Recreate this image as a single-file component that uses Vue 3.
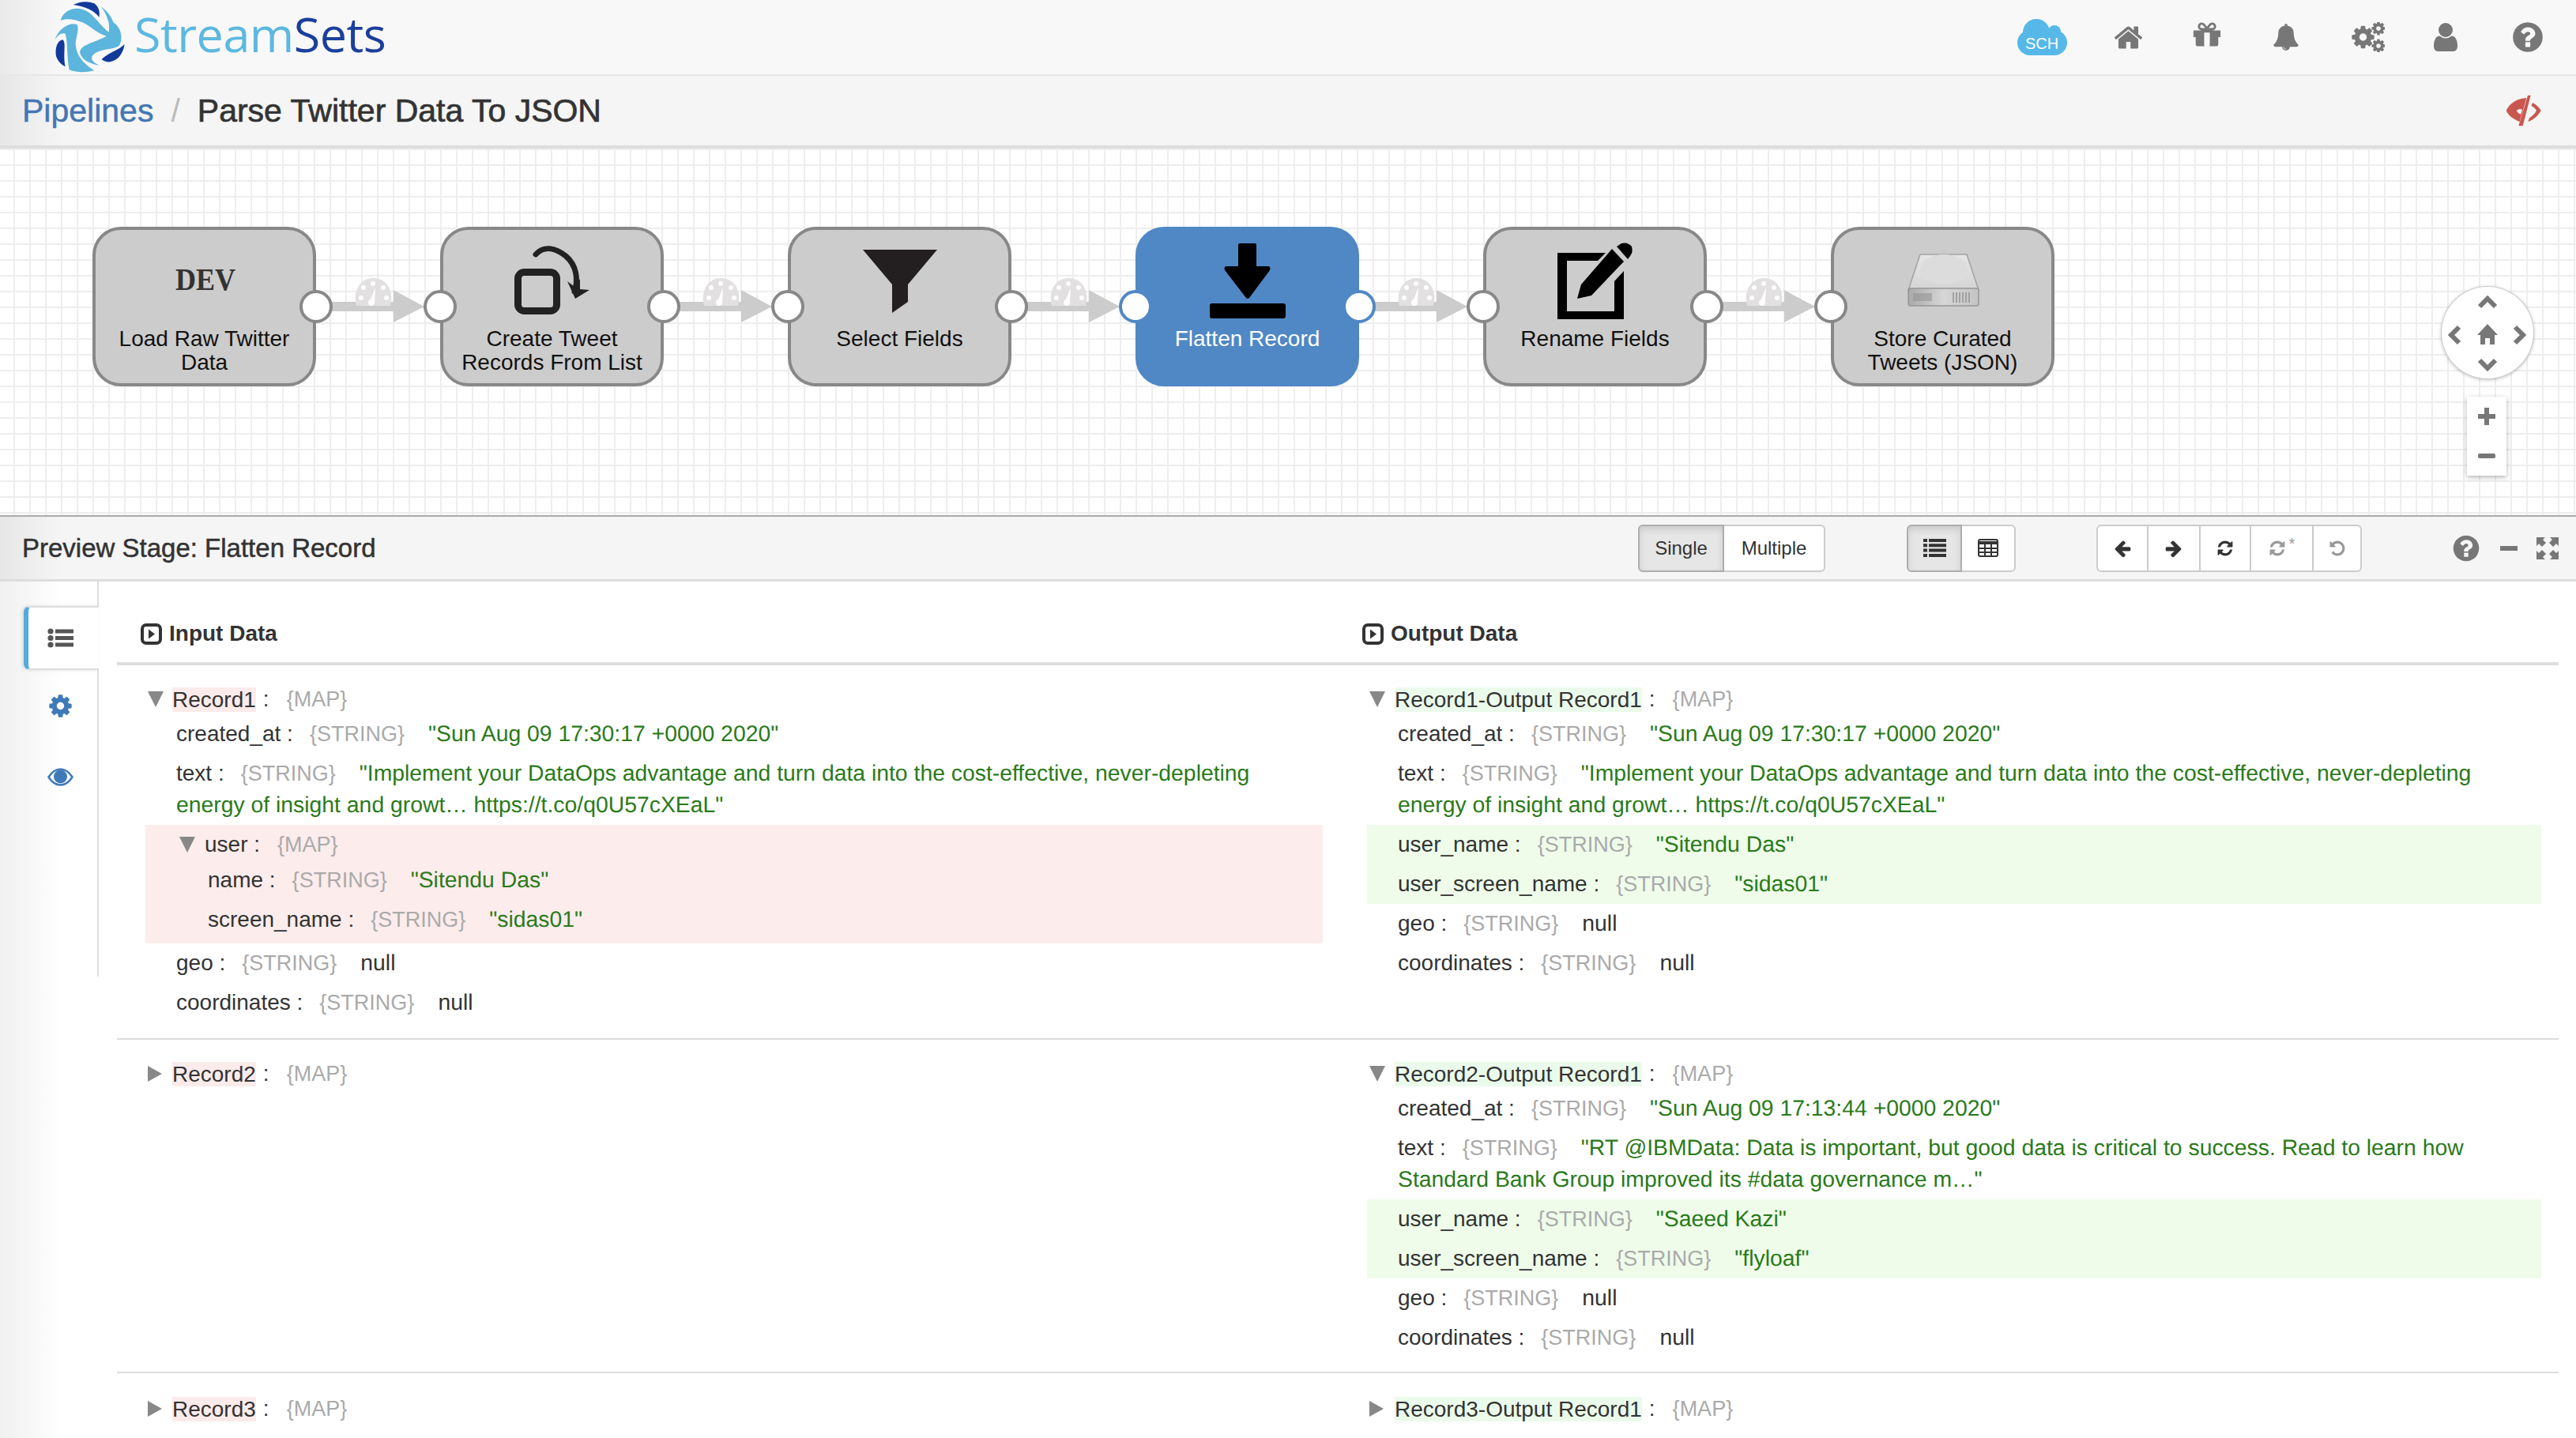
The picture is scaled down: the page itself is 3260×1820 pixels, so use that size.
<template>
  <div class="page">
    <header class="nav shade">
      <div class="brand">
        <svg class="logo" viewBox="0 0 330 276">
          <path fill="#123a9a" d="M110 15Q150-5 190 10 215 30 208 62 180 25 110 15Z" />
          <path fill="#5cb5dc" d="M62 75C70 40 110 22 145 32 185 45 195 75 245 120L250 138C205 130 175 95 145 82 115 70 85 65 62 75Z" />
          <path fill="#5cb5dc" d="M215 22C240 40 255 60 262 82 290 100 302 140 285 170 265 185 230 180 200 195 170 210 175 230 210 245 175 240 140 225 135 195 140 165 190 160 235 135 258 115 245 60 215 22Z" />
          <path fill="#5cb5dc" d="M40 148C55 105 95 80 125 90 135 115 115 145 120 175 125 210 150 240 190 265 150 275 115 270 95 262 85 210 90 160 80 125 60 120 50 135 40 148Z" />
          <path fill="#123a9a" d="M45 210C40 180 50 150 70 148 85 160 70 200 80 250 60 240 50 225 45 210Z" />
          <path fill="#123a9a" d="M218 222C245 195 280 190 305 165 300 195 285 225 250 232 240 233 225 230 218 222Z" />
        </svg>
        <span class="brand-name"><span class="stream">Stream</span><span class="sets">Sets</span></span>
      </div>
      <div class="nav-icons">
        <svg class="cloud" viewBox="0 0 63 46">
          <g fill="#56b8e8">
            <circle cx="24" cy="17" r="17" />
            <circle cx="47" cy="16" r="8" />
            <circle cx="16" cy="30" r="16" />
            <circle cx="47" cy="30" r="16" />
            <rect x="16" y="15" width="31" height="31" />
          </g>
          <text x="31" y="38" text-anchor="middle" class="cloud-text">SCH</text>
        </svg>
        <span v-for="item in navIcons" :key="item.name" class="nav-cell" :class="`cell-${item.name}`">
          <svg :width="item.size" :height="item.size" viewBox="0 0 1792 1792"><path :d="glyphs[item.name]" /></svg>
        </span>
        <span class="nav-cell cell-gears">
          <svg width="42" height="38" viewBox="0 0 42 38">
            <svg x="-2" y="2.500" width="33" height="33" viewBox="0 0 1792 1792"><path :d="glyphs.cog" /></svg>
            <svg x="24" y="-2" width="20" height="20" viewBox="0 0 1792 1792"><path :d="glyphs.cog" /></svg>
            <svg x="24" y="20" width="20" height="20" viewBox="0 0 1792 1792"><path :d="glyphs.cog" /></svg>
          </svg>
        </span>
        <span class="nav-cell cell-user">
          <svg width="42" height="42" viewBox="0 0 1792 1792"><path :d="glyphs.user" /></svg>
        </span>
        <span class="nav-cell cell-help">
          <svg width="44" height="44" viewBox="0 0 1792 1792"><path :d="glyphs.help" /></svg>
        </span>
      </div>
    </header>

    <div class="crumb shade">
      <a class="crumb-link">Pipelines</a>
      <span class="crumb-sep">/</span>
      <span class="crumb-title">Parse Twitter Data To JSON</span>
      <svg class="hidden-eye" viewBox="0 0 270 180">
        <path fill="#c9574f" d="M65 90C80 58 110 44 142 42L116 132C90 122 75 110 65 90Z" />
        <path fill="#f5f5f5" d="M104 90Q114 80 126 86L120 104Q108 100 104 90Z" />
        <path fill="#c9574f" d="M147 32H158L128 148H112Z" />
        <path fill="#c9574f" d="M165 60C180 68 190 78 197 90 185 110 170 125 148 132L153 118C165 110 175 100 180 90 175 82 168 75 160 72Z" />
      </svg>
    </div>

    <section class="canvas">
      <div class="pipeline">
        <template v-for="(stage, i) in stages" :key="stage.name">
          <div class="stage" :class="{ active: stage.active }">
            <span v-if="i > 0" class="port port-in"></span>
            <svg class="stage-icon" width="110" height="103" viewBox="0 0 110 103">
              <text v-if="stage.icon === 'dev'" x="56" y="58" text-anchor="middle" textLength="76" lengthAdjust="spacingAndGlyphs" class="dev-text">DEV</text>
              <g v-if="stage.icon === 'split'">
                <rect x="11.500" y="35.500" width="49" height="49" rx="8" fill="none" stroke="#222" stroke-width="9" />
                <path d="M34 13C44 2 58 4 72 15 86 27 88 45 83 60" fill="none" stroke="#222" stroke-width="7" stroke-linecap="round" />
                <path d="M74 47L83 54 90 44 90 57 102 58 84 69Z" fill="#222" />
              </g>
              <path v-if="stage.icon === 'funnel'" d="M8 7H102L65 51V73L45 87V51Z" fill="#231f20" />
              <g v-if="stage.icon === 'flatten'">
                <path d="M45-1H64Q66-1 66 1V28H80Q85 28 83 33L57 68Q55 70 53 68L26 33Q24 28 29 28H43V1Q43-1 45-1Z" />
                <rect x="7" y="75" width="96" height="19" rx="3" />
              </g>
              <g v-if="stage.icon === 'rename'">
                <path fill-rule="evenodd" d="M68 11H7V95H91V34L79 47V85H19V21H58Z" />
                <path d="M32 69L37 51 76 6 91 22 50 65Z" />
                <path d="M82 3L88-1Q96-3 101 3 103 10 99 15L96 19Z" />
              </g>
              <g v-if="stage.icon === 'disk'">
                <defs>
                  <linearGradient id="diskTop" x1="0" y1="0" x2="0" y2="1">
                    <stop offset="0" stop-color="#e6e6e6" />
                    <stop offset="1" stop-color="#d4d4d4" />
                  </linearGradient>
                  <linearGradient id="diskFront" x1="0" y1="0" x2="1" y2="0">
                    <stop offset="0" stop-color="#a9a9a9" />
                    <stop offset="0.5" stop-color="#d6d6d6" />
                    <stop offset="1" stop-color="#c4c4c4" />
                  </linearGradient>
                </defs>
                <path d="M26 13H85L100 58H11Z" fill="url(#diskTop)" stroke="#a2a2a2" stroke-width="1.500" stroke-linejoin="round" />
                <ellipse cx="56" cy="32" rx="30" ry="19" fill="#dcdcdc" />
                <rect x="11" y="56" width="89" height="22" rx="3" fill="url(#diskFront)" stroke="#969696" stroke-width="1.500" />
                <rect x="17" y="62" width="24" height="10" fill="#8d8d8d" opacity="0.5" />
                <path d="M68 61V74M72 61V74M76 61V74M80 61V74M84 61V74M88 61V74" stroke="#929292" stroke-width="1.500" />
              </g>
            </svg>
            <div class="stage-label">
              <div v-for="line in stage.lines" :key="line">{{ line }}</div>
            </div>
            <span v-if="i < stages.length - 1" class="port port-out"></span>
          </div>
          <svg v-if="i < stages.length - 1" class="link" width="157" height="60" viewBox="0 0 157 60">
            <path d="M20 32H98V17L137 38 98 58V44H20Z" fill="#ccc" />
            <path d="M51 37C46 18 56 2 72.500 2 89 2 99 18 94 37Z" fill="#e2e0e0" />
            <g fill="#fff">
              <circle cx="57" cy="27" r="3" />
              <circle cx="60" cy="14" r="3" />
              <circle cx="72" cy="9" r="3" />
              <circle cx="85" cy="14" r="3" />
              <circle cx="89" cy="27" r="3" />
              <circle cx="70" cy="33" r="4" />
              <path d="M68 31L75 14 74 33Z" />
            </g>
          </svg>
        </template>
      </div>

      <div class="pan">
        <svg width="116" height="116" viewBox="0 0 116 116">
          <g fill="none" stroke="#777" stroke-width="6">
            <path d="M48 25L58 15 68 25" />
            <path d="M48 93L58 103 68 93" />
            <path d="M22 51L12 61 22 71" />
            <path d="M93 51L103 61 93 71" />
          </g>
          <path d="M58 47L71 61H67V73H61V65H55V73H49V61H45Z" fill="#777" />
        </svg>
      </div>
      <div class="zoom-box">
        <span class="zoom-btn"><svg width="22" height="22" viewBox="0 0 22 22"><path d="M8 0H14V8H22V14H14V22H8V14H0V8H8Z" fill="#777" /></svg></span>
        <span class="zoom-btn"><svg width="22" height="6" viewBox="0 0 22 6"><rect width="22" height="6" rx="2" fill="#777" /></svg></span>
      </div>
    </section>

    <div class="phead shade">
      <span class="ptitle">Preview Stage: Flatten Record</span>
      <div class="btn-group mode-group">
        <button class="btn on w-single">Single</button>
        <button class="btn w-multiple">Multiple</button>
      </div>
      <div class="btn-group view-group">
        <button class="btn on w-list">
          <svg width="29" height="23" viewBox="0 0 29 23" fill="#333">
            <path d="M0 0H5V4H0ZM7 0H29V4H7ZM0 6.300H5V10.300H0ZM7 6.300H29V10.300H7ZM0 12.600H5V16.600H0ZM7 12.600H29V16.600H7ZM0 19H5V23H0ZM7 19H29V23H7Z" />
          </svg>
        </button>
        <button class="btn w-table">
          <svg width="26" height="23" viewBox="0 0 26 23">
            <rect x="1" y="1" width="24" height="21" rx="2" fill="#fff" stroke="#333" stroke-width="2" />
            <path d="M1 3H25V7H1Z" fill="#333" />
            <path d="M1 12H25M1 17H25M9 4V22M17 4V22" stroke="#333" stroke-width="2" />
          </svg>
        </button>
      </div>
      <div class="btn-group step-group">
        <button class="btn w-step"><svg width="24" height="24" viewBox="0 0 1792 1792"><path :d="glyphs.left" /></svg></button>
        <button class="btn w-step"><svg width="24" height="24" viewBox="0 0 1792 1792"><path :d="glyphs.right" /></svg></button>
        <button class="btn w-refresh"><svg width="22" height="22" viewBox="0 0 1792 1792"><path :d="glyphs.refresh" /></svg></button>
        <button class="btn w-reset off">
          <svg width="22" height="22" viewBox="0 0 1792 1792"><path :d="glyphs.refresh" /></svg>
          <span class="star">*</span>
        </button>
        <button class="btn w-undo off"><svg width="22" height="22" viewBox="0 0 1792 1792"><path :d="glyphs.undo" /></svg></button>
      </div>
      <svg class="p-help" width="38" height="38" viewBox="0 0 1792 1792"><path :d="glyphs.help" /></svg>
      <span class="p-min"></span>
      <svg class="p-expand" width="28" height="28" viewBox="0 0 28 28" fill="#777">
        <path d="M0 0H11L8 3 12 7 7 12 3 8 0 11Z" />
        <path d="M28 0H17L20 3 16 7 21 12 25 8 28 11Z" />
        <path d="M0 28H11L8 25 12 21 7 16 3 20 0 17Z" />
        <path d="M28 28H17L20 25 16 21 21 16 25 20 28 17Z" />
      </svg>
    </div>

    <div class="pbody shade">
      <aside class="side">
        <div class="side-top"></div>
        <div class="side-item current">
          <svg width="33" height="25" viewBox="0 0 33 25" fill="#555">
            <circle cx="4" cy="4" r="3.600" />
            <circle cx="4" cy="12.500" r="3.600" />
            <circle cx="4" cy="21" r="3.600" />
            <path d="M10 1.500H33V6.500H10ZM10 10H33V15H10ZM10 18.500H33V23.500H10Z" />
          </svg>
        </div>
        <div class="side-item">
          <svg width="33" height="33" viewBox="0 0 1792 1792" fill="#3f7ab8"><path :d="glyphs.cog" /></svg>
        </div>
        <div class="side-item side-last">
          <svg width="33" height="23" viewBox="0 0 33 23">
            <path d="M1.500 11.500C6 4.500 11 1.500 16.500 1.500S27 4.500 31.500 11.500C27 18.500 22 21.500 16.500 21.500S6 18.500 1.500 11.500Z" fill="none" stroke="#3f7ab8" stroke-width="2.500" />
            <circle cx="16.500" cy="11" r="8.500" fill="#3f7ab8" />
          </svg>
        </div>
      </aside>

      <div class="data">
        <div class="data-head">
          <div v-for="title in ['Input Data', 'Output Data']" :key="title" class="data-title">
            <svg width="27" height="27" viewBox="0 0 27 27">
              <rect x="2" y="2" width="23" height="23" rx="5" fill="none" stroke="#333" stroke-width="4" />
              <path d="M10 7.500L18 13.500 10 19.500Z" fill="#333" />
            </svg>
            <span>{{ title }}</span>
          </div>
        </div>

        <div v-for="row in records" :key="row.input.label" class="rec-row">
          <div v-for="(rec, side) in [row.input, row.output]" :key="rec.label" class="rec-col" :class="side === 0 ? 'col-in' : 'col-out'">
            <div class="rec-head">
              <span class="caret" :class="rec.fields ? 'open' : 'closed'"></span>
              <span class="rec-label" :class="side === 0 ? 'pink' : 'mint'">{{ rec.label }}</span>
              <span class="colon">:</span>
              <span class="type map">{MAP}</span>
            </div>
            <template v-for="field in rec.fields" :key="field.name">
              <div v-if="field.children" class="group">
                <div class="group-head">
                  <span class="caret open"></span>
                  <span class="group-name">{{ field.name }} :</span>
                  <span class="type map">{MAP}</span>
                </div>
                <div v-for="child in field.children" :key="child.name" class="field nested">
                  <span>{{ child.name }} :</span>
                  <span class="type">{STRING}</span>
                  <span class="val">"{{ child.value }}"</span>
                </div>
              </div>
              <div v-else class="field" :class="{ added: field.added }">
                <span>{{ field.name }} :</span>
                <span class="type">{STRING}</span>
                <span v-if="field.value === null" class="val nul">null</span>
                <span v-else class="val">"{{ field.value }}"</span>
              </div>
            </template>
          </div>
        </div>
      </div>
    </div>
  </div>
</template>

<script setup>
const glyphs = {
  home: 'M1472 992v480q0 26-19 45t-45 19h-384v-384h-256v384h-384q-26 0-45-19t-19-45v-480q0-1 .5-3t.5-3l575-474 575 474q1 2 1 6zm223-69l-62 74q-8 9-21 11h-3q-13 0-21-7l-692-577-692 577q-12 8-24 7-13-2-21-11l-62-74q-8-10-7-23.5t11-21.5l719-599q32-26 76-26t76 26l244 204v-195q0-14 9-23t23-9h192q14 0 23 9t9 23v408l219 182q10 8 11 21.5t-7 23.5z',
  gift: 'M1056 1356v-716h-320v716q0 25 18 38.5t46 13.5h192q28 0 46-13.5t18-38.5zm-456-972h195l-126-161q-26-31-69-31-40 0-68 28t-28 68 28 68 68 28zm688-96q0-40-28-68t-68-28q-43 0-69 31l-125 161h194q40 0 68-28t28-68zm376 256v320q0 14-9 23t-23 9h-96v416q0 40-28 68t-68 28h-1088q-40 0-68-28t-28-68v-416h-96q-14 0-23-9t-9-23v-320q0-14 9-23t23-9h440q-93 0-158.5-65.5t-65.5-158.5 65.5-158.5 158.5-65.5q107 0 168 77l128 165 128-165q61-77 168-77 93 0 158.5 65.5t65.5 158.5-65.5 158.5-158.5 65.5h440q14 0 23 9t9 23z',
  bell: 'M912 1696q0-16-16-16-59 0-101.5-42.5t-42.5-101.5q0-16-16-16t-16 16q0 73 51.5 124.5t124.5 51.5q16 0 16-16zm816-288q0 52-38 90t-90 38h-448q0 106-75 181t-181 75-181-75-75-181h-448q-52 0-90-38t-38-90q50-42 91-88t85-119.5 74.5-158.5 50-206 19.5-260q0-152 117-282.5t307-158.5q-8-19-8-39 0-40 28-68t68-28 68 28 28 68q0 20-8 39 190 28 307 158.5t117 282.5q0 139 19.5 260t50 206 74.5 158.5 85 119.5 91 88z',
  user: 'M1536 1399q0 109-62.5 187t-150.5 78h-854q-88 0-150.5-78t-62.5-187q0-85 8.5-160.5t31.5-152 58.5-131 94-89 134.5-34.5q131 128 313 128t313-128q76 0 134.5 34.5t94 89 58.5 131 31.5 152 8.5 160.5zm-256-887q0 159-112.5 271.5t-271.5 112.5-271.5-112.5-112.5-271.5 112.5-271.5 271.5-112.5 271.5 112.5 112.5 271.5z',
  help: 'M1024 1376v-192q0-14-9-23t-23-9h-192q-14 0-23 9t-9 23v192q0 14 9 23t23 9h192q14 0 23-9t9-23zm256-672q0-88-55.5-163t-138.5-116-170-41q-243 0-371 213-15 24 8 42l132 100q7 6 19 6 16 0 25-12 53-68 86-92 34-24 86-24 48 0 85.5 26t37.5 59q0 38-20 61t-68 45q-63 28-115.5 86.5t-52.5 125.5v36q0 14 9 23t23 9h192q14 0 23-9t9-23q0-19 21.5-49.5t54.5-49.5q32-18 49-28.5t46-35 44.5-48 28-60.5 12.5-81zm384 192q0 209-103 385.5t-279.5 279.5-385.5 103-385.5-103-279.5-279.5-103-385.5 103-385.5 279.5-279.5 385.5-103 385.5 103 279.5 279.5 103 385.5z',
  cog: 'M1152 896q0-106-75-181t-181-75-181 75-75 181 75 181 181 75 181-75 75-181zm512-109v222q0 12-8 23t-20 13l-185 28q-19 54-39 91 35 50 107 138 10 12 10 25t-9 23q-27 37-99 108t-94 71q-12 0-26-9l-138-108q-44 23-91 38-16 136-29 186-7 28-36 28h-222q-14 0-24.5-8.5t-11.5-21.5l-28-184q-49-16-90-37l-141 107q-10 9-25 9-14 0-25-11-126-114-165-168-7-10-7-23 0-12 8-23 15-21 51-66.5t54-70.5q-27-50-41-99l-183-27q-13-2-21-12.5t-8-23.5v-222q0-12 8-23t19-13l186-28q14-46 39-92-40-57-107-138-10-12-10-24 0-10 9-23 26-36 98.5-107.5t94.5-71.5q13 0 26 10l138 107q44-23 91-38 16-136 29-186 7-28 36-28h222q14 0 24.5 8.5t11.5 21.5l28 184q49 16 90 37l142-107q9-9 24-9 13 0 25 10 129 119 165 170 7 8 7 22 0 12-8 23-15 21-51 66.5t-54 70.5q26 50 41 98l183 28q13 2 21 12.5t8 23.5z',
  refresh: 'M1639 1056q0 5-1 7-64 268-268 434.5t-478 166.5q-146 0-282.5-55t-243.5-157l-129 129q-19 19-45 19t-45-19-19-45v-448q0-26 19-45t45-19h448q26 0 45 19t19 45-19 45l-137 137q71 66 161 102t187 36q134 0 250-65t186-179q11-17 53-117 8-23 30-23h192q13 0 22.5 9.5t9.5 22.5zm25-800v448q0 26-19 45t-45 19h-448q-26 0-45-19t-19-45 19-45l138-138q-148-137-349-137-134 0-250 65t-186 179q-11 17-53 117-8 23-30 23h-199q-13 0-22.5-9.5t-9.5-22.5v-7q65-268 270-434.5t480-166.5q146 0 284 55.5t245 156.5l130-129q19-19 45-19t45 19 19 45z',
  undo: 'M1664 896q0 156-61 298t-164 245-245 164-298 61q-172 0-327-72.5t-264-204.5q-7-10-6.500-22.500t8.500-20.500l137-138q10-9 25-9 16 2 23 12 73 95 179 147t225 52q104 0 198.500-40.500t163.500-109.500 109.500-163.500 40.500-198.500-40.500-198.500-109.500-163.500-163.500-109.500-198.500-40.500q-98 0-188 35.500t-160 101.500l137 138q31 30 14 69-17 40-59 40h-448q-26 0-45-19t-19-45v-448q0-42 40-59 39-17 69 14l130 129q107-101 244.500-156.500t284.500-55.500q156 0 298 61t245 164 164 245 61 298z',
  left: 'M1664 896v128q0 53-32.500 90.500t-84.500 37.500h-704l293 294q38 36 38 90t-38 90l-75 76q-37 37-90 37-52 0-91-37l-651-652q-37-37-37-90 0-52 37-91l651-650q38-38 91-38 52 0 90 38l75 74q38 38 38 91t-38 91l-293 293h704q52 0 84.500 37.500t32.500 90.500z',
  right: 'M1600 960q0 54-37 91l-651 651q-39 37-91 37-51 0-90-37l-75-75q-38-38-38-91t38-91l293-293h-704q-52 0-84.500-37.500t-32.500-90.500v-128q0-53 32.500-90.500t84.500-37.500h704l-293-294q-38-36-38-90t38-90l75-75q38-38 90-38 53 0 91 38l651 651q37 35 37 90z'
}

const navIcons = [
  { name: 'home', size: 39 },
  { name: 'gift', size: 40 },
  { name: 'bell', size: 34 }
]

const stages = [
  { name: 'load', icon: 'dev', lines: ['Load Raw Twitter', 'Data'] },
  { name: 'create', icon: 'split', lines: ['Create Tweet', 'Records From List'] },
  { name: 'select', icon: 'funnel', lines: ['Select Fields'] },
  { name: 'flatten', icon: 'flatten', lines: ['Flatten Record'], active: true },
  { name: 'rename', icon: 'rename', lines: ['Rename Fields'] },
  { name: 'store', icon: 'disk', lines: ['Store Curated', 'Tweets (JSON)'] }
]

const tweet1 = 'Implement your DataOps advantage and turn data into the cost-effective, never-depleting energy of insight and growt… https://t.co/q0U57cXEaL'
const tweet2 = 'RT @IBMData: Data is important, but good data is critical to success. Read to learn how Standard Bank Group improved its #data governance m…'

const records = [
  {
    input: {
      label: 'Record1',
      fields: [
        { name: 'created_at', value: 'Sun Aug 09 17:30:17 +0000 2020' },
        { name: 'text', value: tweet1 },
        {
          name: 'user',
          children: [
            { name: 'name', value: 'Sitendu Das' },
            { name: 'screen_name', value: 'sidas01' }
          ]
        },
        { name: 'geo', value: null },
        { name: 'coordinates', value: null }
      ]
    },
    output: {
      label: 'Record1-Output Record1',
      fields: [
        { name: 'created_at', value: 'Sun Aug 09 17:30:17 +0000 2020' },
        { name: 'text', value: tweet1 },
        { name: 'user_name', value: 'Sitendu Das', added: true },
        { name: 'user_screen_name', value: 'sidas01', added: true },
        { name: 'geo', value: null },
        { name: 'coordinates', value: null }
      ]
    }
  },
  {
    input: { label: 'Record2' },
    output: {
      label: 'Record2-Output Record1',
      fields: [
        { name: 'created_at', value: 'Sun Aug 09 17:13:44 +0000 2020' },
        { name: 'text', value: tweet2 },
        { name: 'user_name', value: 'Saeed Kazi', added: true },
        { name: 'user_screen_name', value: 'flyloaf', added: true },
        { name: 'geo', value: null },
        { name: 'coordinates', value: null }
      ]
    }
  },
  {
    input: { label: 'Record3' },
    output: { label: 'Record3-Output Record1' }
  }
]
</script>

<style>
html, body { overflow: hidden; background: #fff; }
</style>

<style scoped>
.page {
  width: 3260px;
  height: 1820px;
  overflow: hidden;
  font-family: "Liberation Sans", Arial, sans-serif;
  color: #333;
}

.shade {
  background-image: linear-gradient(90deg, rgba(0, 0, 0, 0.06), rgba(0, 0, 0, 0) 80px);
}

/* top bar */
.nav {
  height: 94px;
  box-sizing: content-box;
  border-bottom: 2px solid #e7e7e7;
  background-color: #f8f8f8;
  display: flex;
  align-items: center;
  padding-left: 56px;
}

.brand { display: flex; align-items: center; }
.logo { width: 110px; height: 92px; display: block; }

.brand-name {
  font-family: "Open Sans", sans-serif;
  font-weight: 400;
  font-size: 61px;
  margin: -9px 0 0 4px;
  letter-spacing: -0.5px;
}

.stream { color: #5cb8e0; }
.sets { color: #1a3f9c; }

.nav-icons {
  margin-left: auto;
  display: flex;
  align-items: center;
  padding-right: 15px;
}

.nav-icons svg { fill: #777; display: block; }
.nav-icons .cloud { width: 63px; height: 46px; margin-right: 27px; }
.cloud-text { fill: #fff; font-size: 20px; font-family: "Liberation Sans", sans-serif; }

.nav-cell {
  width: 100px;
  display: flex;
  justify-content: center;
}

.cell-gears, .cell-help { padding-left: 8px; box-sizing: border-box; }
.cell-gears { margin-right: 2px; }

/* breadcrumb */
.crumb {
  height: 88px;
  background-color: #f5f5f5;
  border-bottom: 4px solid #ddd;
  display: flex;
  align-items: center;
  padding-left: 28px;
  font-size: 41px;
}

.crumb-link { color: #4477b3; -webkit-text-stroke: 0.5px #4477b3; }
.crumb-sep { color: #bbb; margin: 0 22px; }
.crumb-title { color: #333; -webkit-text-stroke: 0.7px #333; }
.hidden-eye { width: 90px; height: 60px; margin-left: auto; margin-right: 20px; }

/* pipeline canvas */
.canvas {
  position: relative;
  height: 464px;
  box-sizing: content-box;
  border-bottom: 2px solid #aaa;
  background-color: #fff;
  background-image:
    linear-gradient(#eee 2px, transparent 2px),
    linear-gradient(90deg, #eee 2px, transparent 2px);
  background-size: 20px 20px;
  background-position: 17px 0;
}

.pipeline {
  display: flex;
  align-items: flex-start;
  padding: 99px 0 0 117px;
}

.stage {
  position: relative;
  width: 283px;
  height: 202px;
  flex: none;
  box-sizing: border-box;
  border: 4px solid #888;
  border-radius: 36px;
  background: #ccc;
  color: #111;
  padding-top: 18px;
  text-align: center;
}

.stage.active { background: #5088c5; border-color: #5088c5; color: #fff; }
.stage-icon { display: block; margin: 0 auto 2px; overflow: visible; }
.dev-text { font-family: "Liberation Serif", serif; font-weight: 700; font-size: 40px; fill: #333; }

.stage-label {
  font-size: 28px;
  line-height: 30px;
  white-space: nowrap;
}

.port {
  position: absolute;
  top: 76px;
  width: 42px;
  height: 42px;
  box-sizing: border-box;
  border: 4px solid #888;
  border-radius: 50%;
  background: #fff;
}

.port-in { left: -25px; }
.port-out { right: -25px; }
.stage.active .port { border-color: #5088c5; }

.link { flex: none; margin-top: 63px; display: block; }

.pan {
  position: absolute;
  left: 3090px;
  top: 175px;
  width: 116px;
  height: 116px;
  border-radius: 50%;
  background: #fff;
  box-shadow: 0 0 0 1px #ccc, 0 1px 5px rgba(0, 0, 0, 0.35);
}

.pan svg { display: block; }

.zoom-box {
  position: absolute;
  left: 3122px;
  top: 314px;
  width: 50px;
  height: 100px;
  background: #fff;
  box-shadow: 0 2px 6px rgba(0, 0, 0, 0.3);
}

.zoom-btn {
  height: 50px;
  display: flex;
  align-items: center;
  justify-content: center;
}

/* preview header */
.phead {
  height: 79px;
  background-color: #f5f5f5;
  border-bottom: 3px solid #ddd;
  display: flex;
  align-items: center;
  padding: 0 22px 0 28px;
}

.ptitle { font-size: 33px; -webkit-text-stroke: 0.5px #333; }

.btn-group { display: flex; height: 60px; }
.mode-group { margin-left: auto; }
.view-group { margin-left: 103px; }
.step-group { margin-left: 102px; }

.btn {
  height: 60px;
  box-sizing: border-box;
  padding: 0;
  margin: 0;
  background: #fff;
  border: 2px solid #ccc;
  border-left-width: 0;
  font-family: inherit;
  font-size: 24px;
  color: #333;
  display: flex;
  align-items: center;
  justify-content: center;
}

.btn svg { fill: #333; display: block; }
.btn:first-child { border-left-width: 2px; border-radius: 6px 0 0 6px; }
.btn:last-child { border-radius: 0 6px 6px 0; }
.btn.on { background: #e6e6e6; box-shadow: inset 0 4px 8px rgba(0, 0, 0, 0.12); border-color: #adadad; }
.btn.off svg { fill: #999; }
.star { font-size: 20px; color: #999; margin: -10px 0 0 4px; }

.w-single { width: 109px; }
.w-multiple { width: 128px; }
.w-list { width: 70px; }
.w-table { width: 68px; }
.w-step { width: 66px; }
.w-refresh { width: 64px; }
.w-reset { width: 79px; }
.w-undo { width: 61px; }

.p-help { fill: #777; margin-left: 113px; display: block; }
.p-min { width: 22px; height: 6px; background: #777; margin-left: 24px; }
.p-expand { margin-left: 24px; display: block; }

/* preview body */
.pbody {
  display: flex;
  align-items: flex-start;
  padding-right: 22px;
}

.side { width: 125px; flex: none; height: 500px; display: flex; flex-direction: column; }
.side-top { height: 31px; border-right: 2px solid #ddd; }

.side-item {
  height: 90px;
  display: flex;
  align-items: center;
  padding-left: 60px;
  border-right: 2px solid #ddd;
}

.side-item.current {
  height: 81px;
  box-sizing: border-box;
  margin-left: 30px;
  padding-left: 24px;
  background: #fff;
  border: 2px solid #ddd;
  border-left: 6px solid #55aadd;
  border-right: 0;
  border-radius: 8px 0 0 8px;
  box-shadow: -2px 0 4px rgba(0, 0, 0, 0.12);
}

.side-last { flex: 1; align-items: flex-start; padding-top: 34px; }

.data { flex: 1; margin-left: 23px; min-width: 0; }

.data-head {
  display: grid;
  grid-template-columns: 1546px 1fr;
  height: 102px;
  border-bottom: 4px solid #ddd;
  box-sizing: content-box;
}

.data-title {
  display: flex;
  align-items: center;
  gap: 9px;
  padding: 30px 0 0 30px;
  font-size: 28px;
  font-weight: 700;
}

.rec-row {
  display: grid;
  grid-template-columns: 1546px 1fr;
  padding: 24px 0 20px;
  border-bottom: 2px solid #ddd;
}

.rec-row:nth-child(3) { padding-bottom: 18px; }
.rec-row:last-child { padding-top: 26px; border-bottom: 0; }

.rec-col { padding-left: 36px; font-size: 28px; line-height: 40px; }
.col-in { padding-right: 20px; }
.col-out { padding-right: 22px; }

.rec-head {
  height: 38px;
  display: flex;
  align-items: center;
  padding-left: 3px;
  white-space: nowrap;
}

.caret { width: 0; height: 0; flex: none; }
.caret.open { border-left: 10px solid transparent; border-right: 10px solid transparent; border-top: 20px solid #888; }
.caret.closed { border-top: 10px solid transparent; border-bottom: 10px solid transparent; border-left: 18px solid #888; margin-right: 2px; }

.rec-label { margin-left: 11px; line-height: 31px; }
.col-out .rec-label { margin-left: 12px; }
.pink { background: #fcebeb; }
.mint { background: #ebfbeb; }
.colon { margin-left: 9px; }

.type { color: #aaa; font-size: 27px; margin-left: 21px; }
.type.map { margin-left: 22px; }
.val { color: #2a7a1a; margin-left: 30px; font-size: 28.35px; line-height: 1; text-rendering: geometricPrecision; }
.val.nul { color: #333; }

.field { padding: 5px 40px 5px 39px; }
.field.added { background: #eefce9; }

.group { background: #fcecec; padding-bottom: 5px; }

.group-head {
  height: 45px;
  box-sizing: border-box;
  padding: 4px 0 0 43px;
  display: flex;
  align-items: center;
}

.group-name { margin-left: 12px; }
.field.nested { padding-left: 79px; }
</style>
